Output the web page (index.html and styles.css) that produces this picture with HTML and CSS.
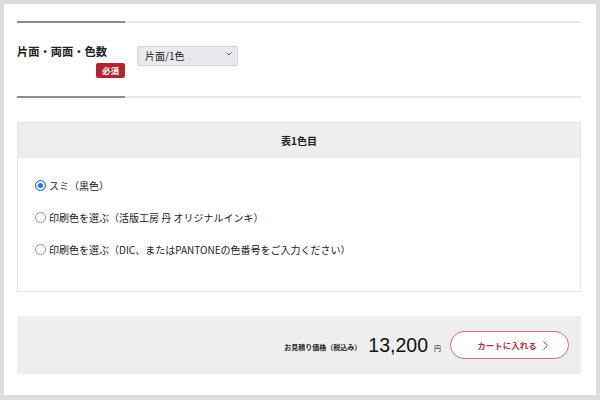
FILE: index.html
```html
<!DOCTYPE html>
<html lang="ja">
<head>
    <meta charset="UTF-8">
    <meta name="viewport" content="width=device-width, initial-scale=1.0">
    <title>印刷色</title>
    <link rel="stylesheet" href="styles.css">
</head>
<body>
    <div class="page">
        <div class="rule"><span class="rule-dark"></span><span class="rule-light"></span></div>
        <div class="field-row">
            <div class="field-label">
                <div class="label-text">片面・両面・色数</div>
                <span class="badge">必須</span>
            </div>
            <div class="select-wrap">
                <select class="select">
                    <option>片面/1色</option>
                    <option>片面/2色</option>
                    <option>両面/1色</option>
                </select>
                <svg class="select-arrow" width="6" height="4" viewBox="0 0 6 4"><path d="M0.5 0.5 L3 3 L5.5 0.5" fill="none" stroke="#555" stroke-width="1"/></svg>
            </div>
        </div>
        <div class="rule"><span class="rule-dark"></span><span class="rule-light"></span></div>

        <div class="color-box">
            <div class="color-head">表1色目</div>
            <div class="color-body">
                <label class="choice"><input type="radio" name="color1" class="radio" checked> スミ（黒色）</label>
                <label class="choice"><input type="radio" name="color1" class="radio"> 印刷色を選ぶ（活版工房 丹 オリジナルインキ）</label>
                <label class="choice"><input type="radio" name="color1" class="radio"> 印刷色を選ぶ（DIC、またはPANTONEの色番号をご入力ください）</label>
            </div>
        </div>

        <div class="price-bar">
            <span class="price-label">お見積り価格（税込み）</span>
            <span class="price">13,200</span>
            <span class="yen">円</span>
            <button class="cart-btn">カートに入れる
                <svg width="5" height="9" viewBox="0 0 5 9"><path d="M0.5 0.5 L4.3 4.5 L0.5 8.5" fill="none" stroke="#b0353c" stroke-width="1"/></svg>
            </button>
        </div>
    </div>
</body>
</html>
```

FILE: styles.css
```css
body {
    margin: 0;
    padding: 4px;
    background-color: #dcdcdc;
    font-family: "Noto Sans CJK JP", "Noto Sans", sans-serif;
    color: #222;
}
.page {
    background-color: white;
    height: 391px;
    padding: 17px 15px 0 13px;
    box-sizing: border-box;
}
.rule {
    display: flex;
    height: 2px;
}
.rule-dark {
    width: 108px;
    background-color: #8c8c8c;
}
.rule-light {
    flex: 1;
    background-color: #e8e8e8;
}
.field-row {
    display: flex;
    gap: 12px;
    padding: 18px 0;
}
.field-label {
    width: 108px;
    display: flex;
    flex-direction: column;
    align-items: flex-end;
}
.label-text {
    align-self: flex-start;
    font-size: 11.25px;
    font-weight: bold;
    line-height: 20px;
    white-space: nowrap;
}
.badge {
    margin-top: 2px;
    width: 29px;
    height: 15px;
    line-height: 15px;
    text-align: center;
    background-color: #b1262e;
    color: white;
    font-size: 8.5px;
    font-weight: bold;
    border-radius: 2px;
}
.select-wrap {
    position: relative;
    width: 101px;
    height: 20px;
}
.select {
    appearance: none;
    width: 100%;
    height: 20px;
    margin: 0;
    padding: 0 0 0 7px;
    background-color: #e9e9ed;
    border: 1px solid #d6d6da;
    border-radius: 2px;
    font-family: inherit;
    font-size: 10px;
    color: #222;
}
.select-arrow {
    position: absolute;
    right: 6px;
    top: 11px;
    pointer-events: none;
}
.color-box {
    margin-top: 24px;
    border: 1px solid #e6e6e6;
}
.color-head {
    height: 35px;
    line-height: 35px;
    text-align: center;
    background-color: #eeeeee;
    font-size: 10px;
    font-weight: bold;
}
.color-body {
    display: flex;
    flex-direction: column;
    gap: 12px;
    padding: 17px 17px 32px;
}
.choice {
    display: flex;
    align-items: center;
    gap: 3px;
    height: 20px;
    font-size: 10px;
    white-space: nowrap;
}
.radio {
    appearance: none;
    width: 11px;
    height: 11px;
    margin: 0;
    border: 1px solid #8e8e93;
    border-radius: 50%;
    background-color: white;
}
.radio:checked {
    border-color: #1f74e8;
    background-color: #1f74e8;
    box-shadow: inset 0 0 0 2px white;
}
.price-bar {
    margin-top: 24px;
    height: 58px;
    background-color: #eeeeee;
    display: flex;
    align-items: center;
    justify-content: flex-end;
    padding-right: 12px;
}
.price-label {
    font-size: 7px;
    font-weight: bold;
    margin-right: 7px;
    margin-top: 4px;
}
.price {
    font-family: "Liberation Sans", Arial, sans-serif;
    font-size: 19.5px;
    color: #111;
}
.yen {
    font-size: 7px;
    margin-left: 6px;
    margin-top: 5px;
}
.cart-btn {
    margin-left: 9px;
    width: 119px;
    height: 28px;
    display: flex;
    align-items: center;
    justify-content: center;
    gap: 6px;
    padding: 0 0 0 6px;
    background-color: white;
    border: 1px solid #cf6e73;
    border-radius: 14px;
    font-family: inherit;
    font-size: 8.5px;
    font-weight: bold;
    color: #b0353c;
}
```
